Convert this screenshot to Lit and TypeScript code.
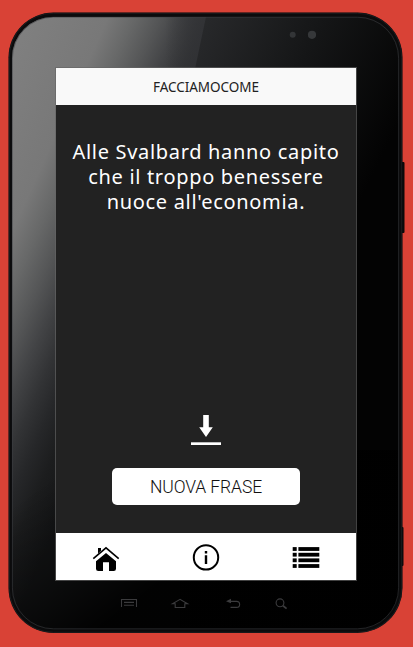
import { LitElement, html, css, svg } from "lit";
import { customElement } from "lit/decorators.js";

const bezel = svg`
  <svg class="bezel" viewBox="0 0 413 647" width="413" height="647" aria-hidden="true">
    <defs>
      <linearGradient id="gloss" gradientUnits="userSpaceOnUse" x1="20" y1="20" x2="239" y2="118">
        <stop offset="0" stop-color="#808080"/>
        <stop offset=".33" stop-color="#787878"/>
        <stop offset=".43" stop-color="#676868"/>
        <stop offset=".53" stop-color="#545556"/>
        <stop offset=".61" stop-color="#434446"/>
        <stop offset=".7" stop-color="#323335"/>
        <stop offset=".78" stop-color="#262729"/>
        <stop offset=".87" stop-color="#1c1d1e"/>
        <stop offset="1" stop-color="#141516"/>
      </linearGradient>
      <linearGradient id="top" gradientUnits="userSpaceOnUse" x1="165" y1="0" x2="210" y2="0">
        <stop offset="0" stop-color="#323336" stop-opacity="0"/>
        <stop offset="1" stop-color="#323336"/>
      </linearGradient>
      <linearGradient id="shade" gradientUnits="userSpaceOnUse" x1="190" y1="30" x2="395" y2="130">
        <stop offset="0" stop-color="#292a2c"/>
        <stop offset=".5" stop-color="#151617"/>
        <stop offset="1" stop-color="#030303"/>
      </linearGradient>
      <linearGradient id="low" gradientUnits="userSpaceOnUse" x1="20" y1="500" x2="110" y2="620">
        <stop offset="0" stop-color="#000" stop-opacity="0"/>
        <stop offset=".5" stop-color="#000" stop-opacity=".35"/>
        <stop offset="1" stop-color="#000" stop-opacity=".9"/>
      </linearGradient>
      <clipPath id="face"><rect x="12" y="17" width="387" height="612" rx="41"/></clipPath>
    </defs>
    <rect x="400" y="162" width="4.5" height="71" rx="1" fill="#090909"/>
    <rect x="400" y="527" width="3.5" height="39" rx="1" fill="#090909"/>
    <rect x="8.5" y="12.5" width="394" height="620.5" rx="45" fill="#0b0b0c"/>
    <rect x="9.3" y="13.3" width="392.4" height="619" rx="44" fill="none" stroke="#232426" stroke-width=".7"/>
    <g clip-path="url(#face)">
      <rect x="8" y="12" width="395" height="621" fill="url(#gloss)"/>
      <rect x="165" y="12" width="48" height="56" fill="url(#top)"/>
      <path d="M207 12 L180 140 V647 H413 V12 Z" fill="url(#shade)"/>
      <rect x="8" y="450" width="395" height="190" fill="url(#low)"/>
    </g>
    <rect x="12.4" y="17.2" width="386.2" height="611.6" rx="41" fill="none" stroke="#404244" stroke-opacity=".6" stroke-width=".9"/>
    <rect x="55.5" y="67.5" width="301" height="513" fill="none" stroke="#666" stroke-opacity=".65" stroke-width="1"/>
    <circle cx="292.7" cy="34.8" r="3" fill="#333537"/>
    <circle cx="312" cy="34.8" r="4.1" fill="#36383a"/>
  </svg>`;

const hardware = svg`
  <svg width="180" height="20" viewBox="116 594 180 20" fill="none" stroke="#3b3b3d" stroke-width="1.1" aria-hidden="true">
    <path d="M121.5 607 V599.5 H136.5 V607 M124 602.4 H134 M124 605.3 H134"/>
    <path d="M180 599.4 L172.5 603.8 H175.2 V607.5 H184.8 V603.8 H187.5 Z"/>
    <path d="M229.5 601.4 H236.5 C240.7 601.4 240.7 607.4 236.5 607.4 H230.5"/>
    <path d="M226 601.2 L231 598.8 V603.3 Z" fill="#3b3b3d" stroke="none"/>
    <circle cx="280" cy="602.8" r="3.9"/>
    <path d="M283 605.8 L286.6 608.6" stroke-width="1.8"/>
  </svg>`;

const download = svg`
  <svg width="30" height="31" viewBox="0 0 30 31" aria-hidden="true">
    <path d="M12.2 1 H17.8 V13.2 H21.8 L15 23 L8.2 13.2 H12.2 Z" fill="#fff"/>
    <path d="M0 28.3 H30 V31 H0 Z" fill="#fff"/>
  </svg>`;

const home = svg`
  <svg width="28" height="28" viewBox="0 0 28 28" aria-hidden="true">
    <path d="M1.3 14.7 L14 3.8 L26.7 14.7" fill="none" stroke="#000" stroke-width="1.6"/>
    <path d="M6 4 H9 V6.8 L6 9.4 Z"/>
    <path d="M14 9 L24 17.2 V24.7 Q24 27 21.7 27 H17 V18.3 H11 V27 H6.3 Q4 27 4 24.7 V17.2 Z"/>
  </svg>`;

const info = svg`
  <svg width="28" height="28" viewBox="0 0 28 28" aria-hidden="true">
    <circle cx="14" cy="13.4" r="12.2" fill="none" stroke="#000" stroke-width="2"/>
    <path d="M12.8 7.1 H15.2 V9.5 H12.8 Z M12.8 11.2 H15.2 V20 H12.8 Z"/>
  </svg>`;

const list = svg`
  <svg width="28" height="28" viewBox="0 0 28 28" aria-hidden="true">
    ${[3.1, 8.8, 14.4, 20.1].map(
      (y) => svg`<rect x=".7" y=${y} width="4" height="3.8"/><rect x="6.4" y=${y} width="20.9" height="3.8"/>`
    )}
  </svg>`;

@customElement("app-root")
export class AppRoot extends LitElement {
  static styles = css`
    :host {
      display: block;
      width: 413px;
      height: 647px;
      background: #d94236;
      overflow: hidden;
    }
    .device {
      position: relative;
      box-sizing: border-box;
      height: 647px;
      padding: 68px 57px 0 56px;
      display: flex;
      flex-direction: column;
    }
    .bezel {
      position: absolute;
      inset: 0;
    }
    .screen {
      position: relative;
      height: 512px;
      display: flex;
      flex-direction: column;
      background: #222;
    }
    .bar {
      height: 37px;
      background: #f9f9f9;
      color: #222;
      text-align: center;
      font: 13.5px/38px "Noto Sans", sans-serif;
      letter-spacing: -0.05px;
    }
    .content {
      flex: 1;
      display: flex;
      flex-direction: column;
      align-items: center;
      padding-bottom: 28px;
    }
    .phrase {
      margin: 34px 0 auto;
      color: #fff;
      font: 20px/25px "Noto Sans", sans-serif;
      letter-spacing: 0.68px;
      text-align: center;
      white-space: nowrap;
    }
    .icon {
      display: flex;
    }
    .button {
      margin: 23px 0 0;
      padding: 0;
      border: 0;
      width: 188px;
      height: 37px;
      border-radius: 5px;
      background: #fff;
      color: #111;
      font: 300 17.5px/39px Roboto, sans-serif;
      letter-spacing: -0.1px;
    }
    .nav {
      height: 47px;
      display: grid;
      grid-template-columns: repeat(3, 1fr);
      place-items: center;
      background: #fff;
    }
    .nav svg {
      display: block;
      margin-top: 3px;
    }
    .keys {
      position: relative;
      display: flex;
      margin: 14px 0 0 60px;
    }
  `;

  render() {
    return html`
      <div class="device">
        ${bezel}
        <main class="screen">
          <header class="bar">FACCIAMOCOME</header>
          <section class="content">
            <p class="phrase">Alle Svalbard hanno capito<br />che il troppo benessere<br />nuoce all'economia.</p>
            <span class="icon">${download}</span>
            <button class="button">NUOVA FRASE</button>
          </section>
          <nav class="nav">${home}${info}${list}</nav>
        </main>
        <div class="keys">${hardware}</div>
      </div>
    `;
  }
}
